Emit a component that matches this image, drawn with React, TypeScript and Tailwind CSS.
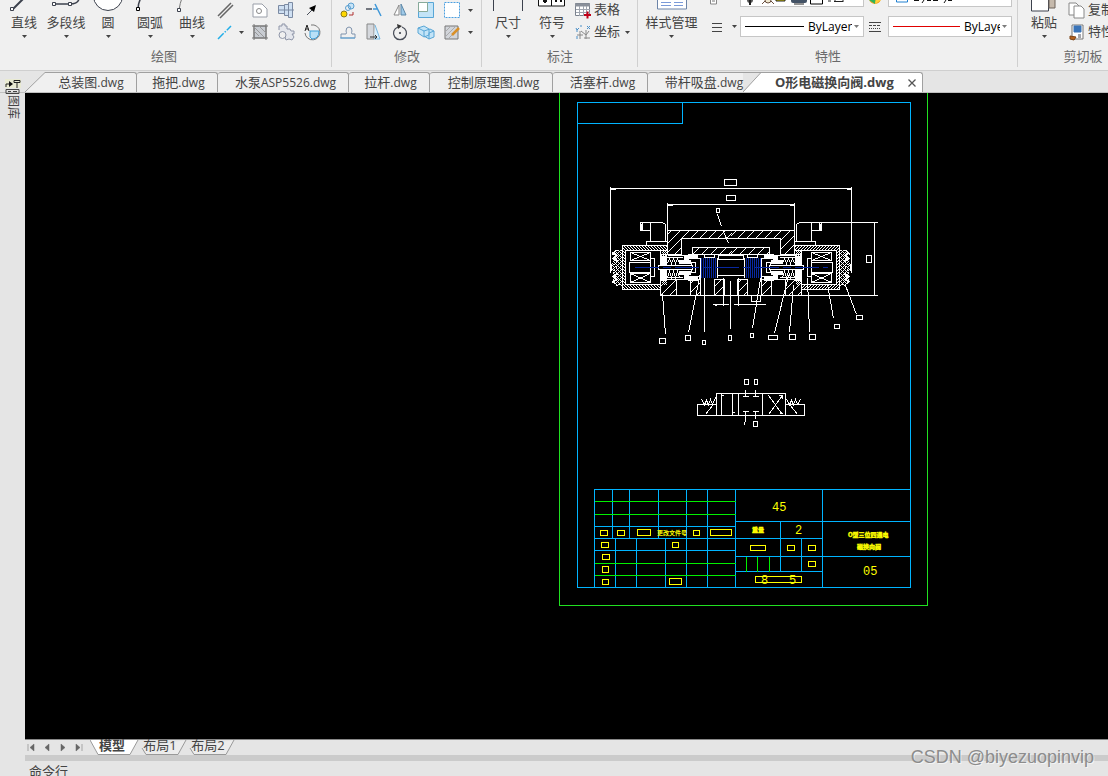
import React from "react";
import cn from "clsx";

const Caret = ({ className }: { className?: string }) => (
  <svg viewBox="0 0 5 3" className={cn("w-[5px] h-[3px] shrink-0", className)}>
    <path d="M0 0h5L2.5 3z" fill="#444" />
  </svg>
);

const Icon = ({ children }: { children: React.ReactNode }) => (
  <svg
    viewBox="0 0 18 18"
    className="w-[18px] h-[18px] shrink-0"
    fill="none"
    stroke="#4a4f5a"
    strokeWidth="1"
  >
    {children}
  </svg>
);

const Group = ({
  title,
  className,
  children,
}: {
  title: string;
  className: string;
  children: React.ReactNode;
}) => (
  <section className={cn("flex flex-col shrink-0 relative", className)}>
    <div className="flex h-[44px] pl-[3px]">{children}</div>
    <h2 className="h-[26px] leading-[25px] text-center text-[#6a6a6a]">
      {title}
    </h2>
    <div className="absolute right-0 top-0 w-px h-[67px] bg-[#d0d0d0]" />
  </section>
);

const BigButton = ({
  label,
  className = "w-[42px]",
  children,
}: {
  label: string;
  className?: string;
  children: React.ReactNode;
}) => (
  <button
    type="button"
    className={cn("flex flex-col items-center shrink-0 h-[44px]", className)}
  >
    <svg
      viewBox="0 0 32 14"
      className="w-8 h-[14px] shrink-0"
      fill="none"
      stroke="#3c414d"
    >
      {children}
    </svg>
    <span className="leading-[16px] whitespace-nowrap">{label}</span>
    <Caret className="mt-[5px]" />
  </button>
);

const IconButton = ({
  label,
  children,
}: {
  label: string;
  children: React.ReactNode;
}) => (
  <button
    type="button"
    aria-label={label}
    className="flex w-[26px] h-[22px] items-center justify-center"
  >
    <Icon>{children}</Icon>
  </button>
);

const TextButton = ({
  label,
  caret,
  icon,
}: {
  label: string;
  caret?: boolean;
  icon: React.ReactNode;
}) => (
  <button
    type="button"
    className="flex h-[22px] items-center gap-[2px] whitespace-nowrap"
  >
    <Icon>{icon}</Icon>
    {label}
    {caret && <Caret className="ml-[3px]" />}
  </button>
);

const Combo = ({
  label,
  value,
  line,
  selectWidth,
}: {
  label: string;
  value: string;
  line: string;
  selectWidth: string;
}) => (
  <div className="flex items-center w-[124px] h-[21px] px-1 bg-white border border-[#c6c6c6]">
    <div className={cn("h-px flex-1", line)} />
    <select
      aria-label={label}
      className={cn(
        "appearance-none shrink-0 pl-1 text-[12px] text-black outline-none",
        selectWidth
      )}
    >
      <option>{value}</option>
    </select>
    <Caret className="ml-[2px] opacity-70" />
  </div>
);

const DrawGroup = () => (
  <Group title="绘图" className="w-[332px] pr-1">
    <BigButton label="直线">
      <path d="M5 9L16-2" strokeWidth="2" />
      <path d="M2.500 7.500h3v3h-3z" fill="#fff" />
    </BigButton>
    <BigButton label="多段线">
      <path d="M4 4h16c5 0 8-1 9-5" strokeWidth="1.500" />
      <path d="M2.500 2.500h3v3h-3zM18.500 2.500h3v3h-3z" fill="#fff" />
    </BigButton>
    <BigButton label="圆">
      <circle cx="16" cy="-4" r="14.500" fill="#fff" />
    </BigButton>
    <BigButton label="圆弧">
      <path d="M4 9Q4 3 7-2" strokeWidth="1.500" />
      <path d="M2.500 7.500h3v3h-3z" fill="#fff" stroke="#000" />
    </BigButton>
    <BigButton label="曲线">
      <path d="M3 10Q4 3 6-2" stroke="#777" />
      <path d="M1.500 8.500h3v3h-3z" fill="#fff" />
    </BigButton>
    <div className="grid grid-cols-[22px_12px_26px_26px_26px] -mt-px content-start">
      <IconButton label="平行线">
        <path d="M1 15L14 2M3 17L16 4" stroke="#666" strokeWidth="1.500" />
      </IconButton>
      <span />
      <IconButton label="轮廓">
        <path d="M2 3h9l5 5v8H2z" fill="#fff" stroke="#999ea8" />
        <circle cx="8" cy="10" r="2.500" stroke="#888" />
      </IconButton>
      <IconButton label="轴">
        <path
          d="M1.500 4.500h6v8h-6zM7.500 3.500h4v11h-4zM11.500 1.500h4v15h-4z"
          fill="#cfe0f3"
          stroke="#7b8aa3"
        />
        <path d="M1 9h16" stroke="#7b8aa3" />
      </IconButton>
      <IconButton label="箭头">
        <path d="M4 14L10 8" />
        <path d="M13 4L11 11 6 7z" fill="#000" stroke="none" />
      </IconButton>
      <IconButton label="中心线">
        <path
          d="M1 16L14 3"
          stroke="#22aee8"
          strokeWidth="1.500"
          strokeDasharray="8 1.500 1.500 1.500"
        />
      </IconButton>
      <button
        type="button"
        aria-label="更多线型"
        className="flex items-center justify-center"
      >
        <Caret />
      </button>
      <IconButton label="剖面线">
        <path
          d="M3 3h12v12H3zM1 3h16M1 15h16M3 1v16M15 1v16"
          fill="#c8ccd2"
          stroke="#777"
        />
        <path d="M3 8l5 5M3 4l10 10M8 3l7 7" stroke="#999" />
      </IconButton>
      <IconButton label="齿轮">
        <path
          d="M2 7V3h3V1h3v2h2v3l3 0 1 2h3v3h-2l2 3-2 3-3-1-3 1-1-3"
          fill="#e4e6ec"
          stroke="#8e95a8"
        />
        <circle cx="5.500" cy="12" r="3.500" fill="#f0f0f0" stroke="#8e95a8" />
      </IconButton>
      <IconButton label="局部放大">
        <path d="M8 2a7.500 7.500 0 1 1-6 8" stroke="#777" />
        <path d="M7 8h9q0 8-7 8l-2-2z" fill="#b9e0f7" stroke="#3f9fd8" />
        <path d="M2 8l2-6 2 6M2.500 6h3" stroke="#222" />
      </IconButton>
    </div>
  </Group>
);

const ModifyGroup = () => (
  <Group title="修改" className="w-[150px]">
    <div className="grid grid-cols-[26px_26px_26px_26px_26px_10px] -mt-px content-start">
      <IconButton label="复制对象">
        <circle cx="5" cy="13" r="3" fill="#ffd800" stroke="#8a7a20" />
        <circle cx="12" cy="5" r="3" fill="#c8e4f7" stroke="#5b9fd0" />
        <circle cx="9" cy="7" r="2.500" stroke="#5b9fd0" />
        <path d="M10 14h4v-3" stroke="#b03030" />
      </IconButton>
      <IconButton label="修剪">
        <path d="M1 8h6" strokeWidth="1.500" />
        <path d="M8 8h5M10 3l6 12" stroke="#4098d8" strokeWidth="1.500" />
      </IconButton>
      <IconButton label="镜像">
        <path d="M8 4v10H3z" fill="#fff" stroke="#888" />
        <path d="M10 3v11h5z" fill="#9ec9e8" stroke="#5c88a8" />
      </IconButton>
      <IconButton label="缩放">
        <path d="M1.500 1.500h15v15h-15z" fill="#c3e4f7" stroke="#58a6d6" />
        <path d="M1.500 1.500h9v9h-9z" fill="#fff" stroke="#8a9" />
      </IconButton>
      <IconButton label="拉伸">
        <path
          d="M1.500 1.500h15v15h-15z"
          fill="#fff"
          stroke="#4a9fe0"
          strokeDasharray="2 1"
        />
      </IconButton>
      <button
        type="button"
        aria-label="更多修改"
        className="flex items-center justify-center"
      >
        <Caret />
      </button>
      <IconButton label="偏移">
        <path
          d="M2 11h5q1-1 0-3 0-4 3-4t3 4q-1 2 0 3h3v4H2z"
          stroke="#7f93ad"
        />
        <path d="M1 15h15" stroke="#5ba4da" />
      </IconButton>
      <IconButton label="打断">
        <path d="M2 1h7v15H2z" fill="#d5d8dd" stroke="#888" />
        <path d="M10 2l5 14H9" fill="#d9eefb" stroke="#76b7e0" />
        <path d="M5 14h7m-2-2l2 2-2 2" stroke="#333" />
      </IconButton>
      <IconButton label="旋转">
        <path d="M7 4a6.500 6.500 0 1 0 4 0" strokeWidth="1.300" />
        <path d="M6 1l5 2-4 3z" fill="#333" stroke="none" />
        <circle cx="9" cy="10" r=".7" fill="#333" />
      </IconButton>
      <IconButton label="阵列">
        <path
          d="M1 5l6-2 5 3v6l-5 2-6-4zM7 8l6-2 4 2v6l-5 2-5-3zM1 5l6 3M12 10l5-2M12 10v6"
          fill="#c3e4f7"
          stroke="#58a6d6"
        />
      </IconButton>
      <IconButton label="编辑填充">
        <path d="M2 3h13v13H2z" fill="#d2d5da" stroke="#777" />
        <path d="M2 9l6-6M2 14L13 3M5 16l8-8" stroke="#aaa" />
        <path d="M9 12l7-7" stroke="#d99028" strokeWidth="2.500" />
      </IconButton>
      <button
        type="button"
        aria-label="更多编辑"
        className="flex items-center justify-center"
      >
        <Caret />
      </button>
    </div>
  </Group>
);

const AnnotateGroup = () => (
  <Group title="标注" className="w-[156px]">
    <BigButton label="尺寸" className="w-[46px]">
      <path d="M1.500 0v11M30.500 0v11" />
    </BigButton>
    <BigButton label="符号">
      <path d="M2.500-2h13v8h-13zM15.500-2h13v8h-13z" fill="#fff" stroke="#111" />
      <path d="M9 0v3M7 1h4M19 1h2M24 1h2" stroke="#111" strokeWidth="2" />
    </BigButton>
    <div className="flex flex-col items-start -mt-px pl-px">
      <TextButton
        label="表格"
        icon={
          <>
            <path d="M1.500 2.500h14v12h-14z" fill="#fff" stroke="#7b828e" />
            <path d="M1 4h15" strokeWidth="3" stroke="#8a909a" />
            <path
              d="M2 8.500h14M2 11.500h14M5.500 5v10M9.500 5v10M12.500 5v10"
              stroke="#a0a6b0"
            />
            <path d="M10 14h7M13.500 10.500v7" stroke="#c00018" strokeWidth="2" />
          </>
        }
      />
      <TextButton
        label="坐标"
        caret
        icon={
          <>
            <path
              d="M2 5l1 2 2-2M3 7v2M13 3l3 3M16 3l-3 3M7 2v2M3 13v3"
              stroke="#4a8fc8"
            />
            <path d="M6 8v8M3 12h6M12 7v9M7 8l5 4 3-4M10 15h6" stroke="#888" />
          </>
        }
      />
    </div>
  </Group>
);

const PropertyGroup = () => (
  <Group title="特性" className="w-[380px]">
    <BigButton label="样式管理" className="w-[61px]">
      <path d="M1.500-2h29v11h-29z" fill="#fff" stroke="#6c84a8" />
      <path
        d="M5 2.500h10M18 2.500h9M5 5.500h10M18 5.500h9"
        stroke="#7a9ad8"
      />
    </BigButton>
    <div className="grid grid-cols-[38px_124px_24px_124px] grid-rows-[7px_37px] overflow-hidden">
      <svg viewBox="0 0 38 7" className="w-[38px] h-[7px]">
        <path d="M8.500-1h6v5h-6z" fill="#fff" stroke="#888" />
        <path d="M10 1h3" stroke="#777" />
      </svg>
      <div className="h-[7px] bg-white border border-t-0 border-[#c6c6c6]">
        <svg viewBox="0 0 122 6" className="w-[122px] h-[6px]">
          <circle cx="9" cy="0" r="3" fill="#555" />
          <path d="M9 0v5" stroke="#222" strokeWidth="2" />
          <circle cx="27" cy="0" r="3" fill="#f0e8d0" stroke="#6a5040" />
          <path d="M21 4l3-3M33 4l-3-3" stroke="#6a5040" />
          <path d="M35-2h9v3h-9z" fill="#d8c800" stroke="#222" />
          <rect x="50" y="-3" width="16" height="6" rx="2" fill="#445366" />
          <path d="M53 4h10" stroke="#222" />
          <path d="M69.500-2h12v6h-12z" fill="#fff" stroke="#000" />
          <path d="M87 1h3M93 1.500h9M94 0v2M102 0v2" stroke="#222" />
        </svg>
      </div>
      <svg viewBox="0 0 24 7" className="w-6 h-[7px]">
        <circle cx="11" cy="-2" r="6" fill="#f5a623" />
        <path d="M5 0l6 4 1-6z" fill="#2fb457" />
        <path d="M11 4l6-4-5-2z" fill="#ffd23c" />
      </svg>
      <div className="h-[7px] bg-white border border-t-0 border-[#c6c6c6]">
        <svg viewBox="0 0 122 6" className="w-[122px] h-[6px]">
          <path d="M7.500-2h11v4h-11z" fill="#fff" stroke="#2080d0" />
          <path
            d="M25 .5h5M35 0l-2 3M38 .5h4M44 .5h5M57 0l-2 3M59 .5h4"
            stroke="#111"
          />
        </svg>
      </div>
      <button
        type="button"
        aria-label="线宽列表"
        className="flex h-[39px] items-center gap-[9px] pl-[9px]"
      >
        <svg viewBox="0 0 12 12" className="w-3 h-3">
          <path d="M1 2.500h10M1 6.500h10M1 10.500h10" stroke="#444" />
        </svg>
        <Caret />
      </button>
      <div className="pt-[9px]">
        <Combo
          label="线宽"
          value="ByLayer"
          line="bg-black"
          selectWidth="w-[48px]"
        />
      </div>
      <svg viewBox="0 0 24 37" className="w-6 h-[37px]">
        <path d="M5 15.500h12M5 24.500h12" stroke="#444" />
        <path d="M5 18.500h12" stroke="#444" strokeDasharray="3 1" />
        <path d="M5 21.500h12" stroke="#444" strokeDasharray="1 1" />
      </svg>
      <div className="pt-[9px]">
        <Combo
          label="线型"
          value="ByLayer"
          line="bg-[#e00000]"
          selectWidth="w-[40px]"
        />
      </div>
    </div>
  </Group>
);

const ClipboardGroup = () => (
  <Group title="剪切板" className="w-[134px] pr-1">
    <BigButton label="粘贴" className="w-[46px]">
      <path d="M3.500-2h17v13h-17z" fill="#fff" />
      <path d="M21-2h6v10h-6z" fill="#c5b9ac" stroke="#6c625a" />
    </BigButton>
    <div className="flex flex-col items-start -mt-px pl-px">
      <TextButton
        label="复制"
        icon={
          <>
            <path d="M1 2h7l3 3v9H1z" fill="#fff" stroke="#888" />
            <path d="M6 5h7l3 3v9H6z" fill="#fff" stroke="#888" />
          </>
        }
      />
      <TextButton
        label="特性"
        icon={
          <>
            <path d="M4 2h11v14H4z" fill="#fff" stroke="#777" />
            <path d="M6 3h7v6H6z" fill="#3a74b8" stroke="#3a74b8" />
            <path d="M2 13l6 1-2 3-4-1z" fill="#b8621c" stroke="#7d4416" />
            <path d="M10 12h3M10 14h3" />
          </>
        }
      />
    </div>
  </Group>
);

const files = [
  { name: "总装图", ext: ".dwg", width: "w-[91px]" },
  { name: "拖把", ext: ".dwg", width: "w-[81px] pl-[3px]" },
  { name: "水泵", ext: "ASP5526.dwg", width: "w-[131px] pl-[5px]" },
  { name: "拉杆", ext: ".dwg", width: "w-[81px] pl-[3px]" },
  { name: "控制原理图", ext: ".dwg", width: "w-[123px] pl-[5px]" },
  { name: "活塞杆", ext: ".dwg", width: "w-[95px] pl-[5px]" },
  { name: "带杆吸盘", ext: ".dwg", width: "w-[95px] pl-[17px]" },
];

const FileTabs = () => (
  <nav className="flex h-[22px] shrink-0 items-end pl-[25px] bg-[#e5e5e5] border-b border-[#c0c0c0]">
    <svg viewBox="0 0 21 20" className="w-[21px] h-5 shrink-0">
      <path d="M0 20L20 .5h1V20z" fill="#f0f0f0" />
      <path d="M0 20L20 .5h1" fill="none" stroke="#a0a0a0" />
    </svg>
    {files.map((file, i) => (
      <button
        key={file.name}
        type="button"
        className={cn(
          "flex items-center justify-center h-5 shrink-0 bg-[#f0f0f0] border-t border-[#a0a0a0] whitespace-nowrap",
          file.width,
          i < files.length - 1 && "border-r rounded-tr-[3px]",
          i > 0 && "rounded-tl-[3px]"
        )}
      >
        {file.name}
        <span className="text-[12px]">{file.ext}</span>
      </button>
    ))}
    <svg viewBox="0 0 19 20" className="w-[19px] h-5 shrink-0">
      <path d="M0 20L18 .5h1V20z" fill="#fff" />
      <path d="M0 20L18 .5h1M0 .5h18" fill="none" stroke="#a0a0a0" />
    </svg>
    <div className="flex items-center h-5 w-[161px] shrink-0 pl-[13px] pr-[6px] justify-between bg-white border-t border-r border-[#a0a0a0] rounded-tr-[3px] whitespace-nowrap">
      <button type="button" className="font-bold">
        O形电磁换向阀.dwg
      </button>
      <button type="button" aria-label="关闭">
        <svg viewBox="0 0 8 8" className="w-2 h-2">
          <path d="M.5.5l7 7M7.500.5l-7 7" stroke="#555" strokeWidth="1.300" />
        </svg>
      </button>
    </div>
  </nav>
);

type Box = [number, number, number, number];

const balloons: Box[] = [
  [724, 179, 12, 6],
  [726, 195, 9, 5],
  [716, 208, 3, 4],
  [866, 255, 5, 7],
  [659, 338, 6, 5],
  [685, 335, 5, 5],
  [702, 340, 3, 4],
  [728, 335, 3, 5],
  [750, 333, 3, 4],
  [768, 335, 9, 4],
  [789, 334, 6, 5],
  [809, 334, 6, 5],
  [834, 324, 5, 4],
  [856, 315, 6, 4],
  [744, 379, 4, 5],
  [754, 379, 3, 5],
  [753, 421, 4, 5],
];

const cells: Box[] = [
  [600, 530, 7, 5],
  [617, 530, 7, 5],
  [637, 529, 13, 6],
  [693, 530, 6, 5],
  [710, 529, 21, 6],
  [601, 542, 7, 5],
  [672, 542, 6, 5],
  [602, 554, 7, 5],
  [602, 566, 6, 6],
  [602, 579, 6, 5],
  [669, 578, 12, 6],
  [750, 545, 15, 5],
  [787, 545, 7, 5],
  [808, 545, 7, 5],
  [808, 561, 7, 5],
  [755, 576, 46, 6],
];

const Boxes = ({ items }: { items: Box[] }) => (
  <>
    {items.map(([x, y, w, h]) => (
      <rect key={`${x}-${y}`} x={x} y={y} width={w} height={h} />
    ))}
  </>
);

// left half of the valve, the right half is its mirror image
// (the section hatch keeps its direction, so it comes in as a prop)
const HalfValve = ({ hatch }: { hatch: string }) => (
  <g>
    <path d="M610 186V272M610 188H731M667 202V254M667 204H731M610 189h5M667 205h5" />
    <path d="M731 230H667V254H681V238H731" fill={hatch} />
    <path d="M731 254H692V247H731" fill={hatch} />
    <path d="M650 241V222H662L665 224V241M640 222H650V230H640zM642 222v8M646 241V245H667V241z" />
    <path d="M641 223v6" strokeWidth="3" />
    <path
      d="M622 245H667V250H625V284H660V289H622z"
      fill="url(#dense)"
    />
    <path
      d="M622 249l-3 2-3-2-4 5 3 4-3 5 4 4-4 4 3 5-3 5 4 4 3-1 3 1z"
      fill="url(#mesh)"
      strokeDasharray="3 1"
    />
    <path d="M612 252l4 3-3 3 4 3M612 282l4-3-3-3 4-3" strokeWidth="2" />
    <path d="M611 264l3 3-3 3z" fill="#000" />
    <path d="M630 252H650V260H630zM630 252L650 260M650 252L630 260M630 273H650V282H630zM630 273L650 282M650 273L630 282" />
    <path d="M629 262H650V272H629zM650 258H654V276H650z" />
    <path d="M661 250h5v34h-5z" fill="url(#dots)" stroke="none" />
    <path d="M660 250V295M661 254h5v26h-5z" />
    <path d="M662 256h3v22h-3z" fill="#fff" />
    <path d="M667 255H690M667 279H690M666 257H682M666 277H682" />
    <path
      d="M667 263l2-5 2 5 2-5 2 5 2-5 2 5M667 277l2-6 2 6 2-6 2 6 2-6 2 6"
    />
    <path d="M679 260h5v-5h4v5h2v3h-11zM679 274h5v5h4v-5h2v-3h-11z" fill="#fff" />
    <path d="M688 254H697V257H688zM688 276H697V280H688z" fill="#fff" />
    <path d="M686 258H700M686 276H700M700 257V278" />
    <path d="M658 265H692V269H658z" fill="#000" />
    <path d="M691 265V262H695V272H691V269" />
    <path d="M700 254h4v3h10v-3M718 259V255H741" />
    <path d="M660 279H676V295H660z" fill={hatch} />
    <path d="M700 279H690V295H700zM714 279H724V295H714z" fill={hatch} />
    <path d="M717 259H731M717 275H731M717 257V277M723 277V305M660 295H731" />
  </g>
);

const ValveSheet = () => (
  <svg
    viewBox="559 93 370 514"
    className="w-[370px] h-[514px] shrink-0"
    fill="none"
    shapeRendering="crispEdges"
    role="img"
    aria-label="O形电磁换向阀"
  >
    <defs>
      <pattern
        id="hatch"
        width="9"
        height="9"
        patternUnits="userSpaceOnUse"
        patternTransform="translate(.5 .5)"
      >
        <path d="M0 9L9 0" stroke="#fff" />
      </pattern>
      <pattern
        id="hatchMirrored"
        width="9"
        height="9"
        patternUnits="userSpaceOnUse"
        patternTransform="translate(.5 .5)"
      >
        <path d="M0 0L9 9" stroke="#fff" />
      </pattern>
      <pattern
        id="dense"
        width="3"
        height="3"
        patternUnits="userSpaceOnUse"
        patternTransform="translate(.5 .5)"
      >
        <path d="M0 0h1v1H0zM1 1h1v1H1zM2 2h1v1H2z" fill="#fff" />
      </pattern>
      <pattern
        id="mesh"
        width="4"
        height="4"
        patternUnits="userSpaceOnUse"
        patternTransform="translate(.5 .5)"
      >
        <path
          d="M0 0h1v1H0zM1 1h1v1H1zM2 2h1v1H2zM3 3h1v1H3zM3 1h1v1H3zM1 3h1v1H1z"
          fill="#fff"
        />
      </pattern>
      <pattern
        id="dots"
        width="2"
        height="2"
        patternUnits="userSpaceOnUse"
        patternTransform="translate(.5 .5)"
      >
        <path d="M0 0h1v1H0zM1 1h1v1H1z" fill="#fff" />
      </pattern>
    </defs>
    <g transform="translate(.5 .5)">
      <path d="M559 90V605H927V90" stroke="#21e021" />

      <g stroke="#fff">
        <HalfValve hatch="url(#hatch)" />
        <g transform="translate(1461 0) scale(-1 1)">
          <HalfValve hatch="url(#hatchMirrored)" />
        </g>
        <path d="M811 222H877M800 295H877M874 222V295" />
        <path d="M713 304H728M733 304H765M713 304l4 1M751 295H760V301H751z" />
        <path d="M717 214L721 226M723 231L728 243" />
        <path d="M662 294L665 334M700 272L688 332M704 277V331M730 280V328M760 278L752 328M788 275L774 333M793 285L789 332M807 278L809 332M827 284L833 318M845 285L856 314" />
        <path d="M716 393H785V415H716zM721 393V415M732 393V415M738 393V415M762 393V415" />
        <path d="M697 404H716V415H697zM785 404H804V415H785zM705 414L712 405M790 405L797 414" />
        <path d="M701 399l3 5 2-4 2 4 2-5 2 5 3-7M786 399l3 5 2-4 2 4 2-5 2 5 3-5" />
        <path d="M768 395L782 414M782 395L768 414M778 395h4v3M779 413h3M720 395h3M731 412h3" />
        <path d="M745 389V396M742 396H748M755 389V396M752 396H758M742 411H748M745 411V418L744 425M752 411H758M755 411V418" />
        <Boxes items={balloons} />
      </g>

      <path
        d="M701 257V277M703 257V277M705 257V277M707 257V277M709 257V277M711 257V277M713 257V277M715 257V277M746 257V277M748 257V277M750 257V277M752 257V277M754 257V277M756 257V277M758 257V277M760 257V277"
        stroke="#0828a0"
      />
      <path d="M634 267H827" stroke="#0828a0" strokeDasharray="24 4 8 4" />

      <g stroke="#00b4ff">
        <path d="M577 102H910V587H577zM577 123H682V102" />
        <path d="M594 587V489H910M594 526H735M594 538H735M594 550H735M735 489V587M822 489V587" />
        <path d="M612 489V538M629 489V538M658 489V538M686 489V538M707 489V587M615 538V587M636 538V587M665 538V587M686 538V587" />
        <path d="M735 521H910M735 538H822M735 556H910M735 571H822M780 521V571M801 538V571" />
      </g>
      <path
        d="M594 501H735M594 514H735M594 563H735M594 575H735M746 556V571M757 556V571M769 556V571"
        stroke="#00f000"
      />
      <g stroke="#ffff00">
        <Boxes items={cells} />
      </g>
    </g>
    <g
      fill="#ffff00"
      fontFamily="'Liberation Mono', 'Noto Sans CJK SC', monospace"
      fontSize="12"
    >
      <text x="772" y="511">45</text>
      <text x="795" y="534">2</text>
      <text x="863" y="575">05</text>
      <text x="761" y="584">8</text>
      <text x="789" y="584">5</text>
      <g
        fontFamily="'Noto Sans CJK SC', sans-serif"
        fontSize="6"
        fontWeight="bold"
        stroke="#ffff00"
        strokeWidth=".4"
      >
        <text x="657" y="535" strokeWidth="0">更改文件号</text>
        <text x="752" y="532">重量</text>
        <text x="848" y="537">O型三位四通电</text>
        <text x="857" y="549">磁换向阀</text>
      </g>
    </g>
  </svg>
);

const SideBar = () => (
  <aside className="w-[25px] shrink-0 bg-[#e5e5e5]">
    <button type="button" className="flex flex-col items-center w-full">
      <svg
        viewBox="0 0 16 16"
        className="w-4 h-4 -mt-[14px]"
        fill="none"
        stroke="#222"
      >
        <path d="M0 0h16v9H0z" fill="#e9ead2" stroke="none" />
        <path d="M1 8V5h5" />
        <path d="M4 2l4 3-4 3z" fill="#111" stroke="none" />
        <path d="M9 1.500h6v2H9zM12 4v5" />
        <path d="M1 10.500h13v4H1zM3 12.500h3M8 12.500h4" stroke="#444" />
      </svg>
      <span className="[writing-mode:vertical-rl] [text-orientation:sideways] text-[12px] leading-[14px]">
        图库
      </span>
    </button>
  </aside>
);

const navIcons = [
  { label: "第一个", path: "M2 1v7M8 1v7L4 4.500z" },
  { label: "上一个", path: "M7 1v7L3 4.500z" },
  { label: "下一个", path: "M3 1v7L7 4.500z" },
  { label: "最后一个", path: "M2 1v7L6 4.500zM8 1v7" },
];

const layouts = ["模型", "布局1", "布局2"];

const LayoutTabs = () => (
  <div className="flex h-4 shrink-0 pl-px bg-[#e5e5e5] border-t border-[#888]">
    {navIcons.map((item) => (
      <button
        key={item.label}
        type="button"
        aria-label={item.label}
        className="w-4"
      >
        <svg viewBox="0 0 9 9" className="w-[9px] h-[9px]">
          <path d={item.path} fill="#666" stroke="#666" strokeWidth=".5" />
        </svg>
      </button>
    ))}
    {layouts.map((name, i) => (
      <button
        key={name}
        type="button"
        className={cn(
          "relative flex items-start justify-center h-[15px] w-12 shrink-0 pr-1 leading-[10px]",
          i === 0 && "font-bold z-10"
        )}
      >
        <svg
          viewBox="0 0 56 16"
          className="absolute left-0 top-0 w-14 h-4"
          fill={i === 0 ? "#fff" : "#ececec"}
        >
          <path
            d={i === 0 ? "M0 0L8 14.500h32L48 0" : "M4 8L8 14.500h32L48 0"}
            stroke="#999"
          />
        </svg>
        <span className="relative whitespace-nowrap">{name}</span>
      </button>
    ))}
  </div>
);

const App = () => {
  return (
    <div className="relative flex flex-col h-screen overflow-hidden bg-[#e5e5e5] text-[13px] text-[#444] font-['Open_Sans','Noto_Sans_CJK_SC',sans-serif]">
      <header className="flex h-[71px] shrink-0 overflow-hidden bg-[#f0f0f0] border-b border-[#cfcfcf]">
        <DrawGroup />
        <ModifyGroup />
        <AnnotateGroup />
        <PropertyGroup />
        <ClipboardGroup />
      </header>
      <FileTabs />
      <div className="flex flex-1 min-h-0">
        <SideBar />
        <main className="flex flex-col flex-1 min-w-0">
          <div className="flex flex-1 min-h-0 pl-[534px] overflow-hidden bg-black">
            <ValveSheet />
          </div>
          <LayoutTabs />
          <div className="h-[6px] shrink-0 bg-[#cbcbcb]" />
          <div className="h-[15px] shrink-0 overflow-hidden pt-px pl-1 leading-[18px]">
            命令行
          </div>
        </main>
      </div>
      <div className="absolute right-[14px] bottom-[8px] z-20 text-[18px] leading-[22px] text-[#8c8c8c] [text-shadow:1px_1px_0_#ffffff99] font-['Liberation_Sans',sans-serif]">
        CSDN @biyezuopinvip
      </div>
    </div>
  );
};

export default App;
